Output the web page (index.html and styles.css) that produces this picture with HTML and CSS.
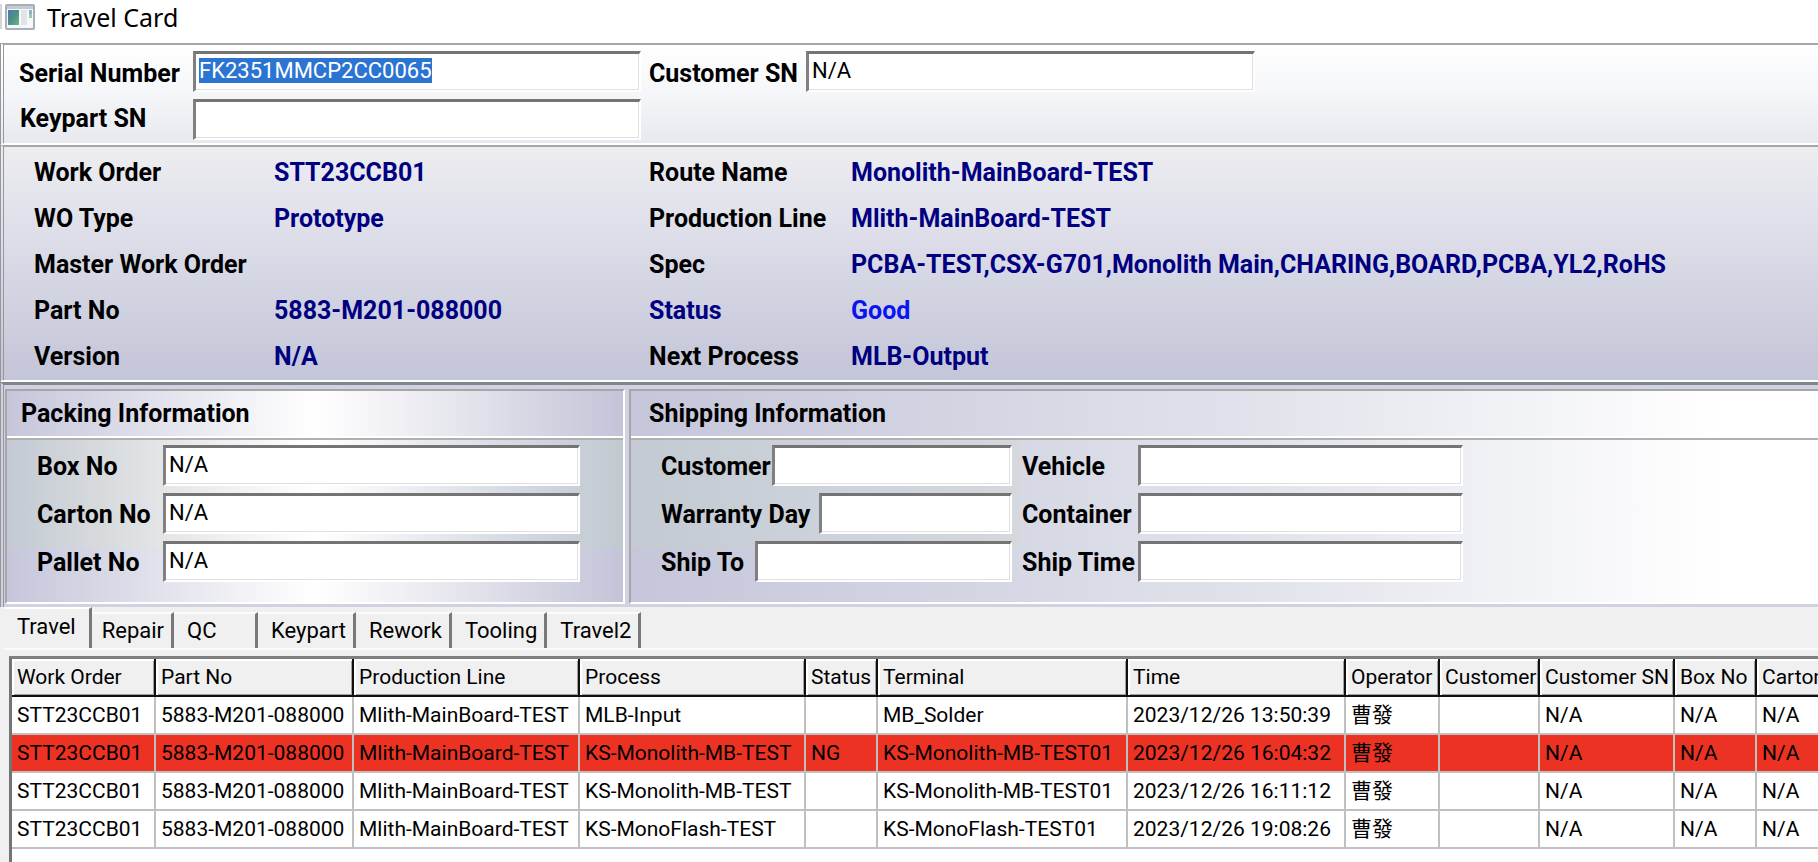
FILE: index.html
```html
<!DOCTYPE html>
<html lang="en">
<head>
<meta charset="utf-8">
<title>Travel Card</title>
<link rel="stylesheet" href="styles.css">
</head>
<body>
<header class="titlebar">
  <svg class="app-icon" viewBox="0 0 36 32" aria-hidden="true">
    <defs><linearGradient id="pic" x1="0" y1="0" x2="1" y2="1"><stop offset="0" stop-color="#4a78b4"/><stop offset="0.5" stop-color="#4f8f86"/><stop offset="1" stop-color="#6fb386"/></linearGradient></defs>
    <path d="M1 3V28" stroke="#d4d6da" stroke-width="2"/>
    <rect x="6" y="4" width="28" height="24" rx="1" fill="#f6f7f9" stroke="#a9afb8" stroke-width="2"/>
    <rect x="7" y="5" width="26" height="3" fill="#c6cbd3"/>
    <rect x="8" y="9" width="11" height="15" fill="url(#pic)"/>
    <rect x="21" y="9" width="6" height="15" fill="#e2e3e6"/>
    <rect x="29" y="9" width="3" height="4" fill="#8fb0dc"/>
    <rect x="29" y="13" width="3" height="4" fill="#9ccb9c"/>
  </svg>
  <h1 class="title">Travel Card</h1>
</header>
<main>
  <form class="search">
    <label class="label" for="sn">Serial Number</label>
    <input class="field" id="sn" value="FK2351MMCP2CC0065">
    <label class="label label-csn" for="csn">Customer SN</label>
    <input class="field" id="csn" value="N/A">
    <label class="label" for="ksn">Keypart SN</label>
    <input class="field" id="ksn">
  </form>

  <section class="details">
    <span>Work Order</span><span class="value">STT23CCB01</span><span>Route Name</span><span class="value">Monolith-MainBoard-TEST</span>
    <span>WO Type</span><span class="value">Prototype</span><span>Production Line</span><span class="value">Mlith-MainBoard-TEST</span>
    <span>Master Work Order</span><span class="value"></span><span>Spec</span><span class="value">PCBA-TEST,CSX-G701,Monolith Main,CHARING,BOARD,PCBA,YL2,RoHS</span>
    <span>Part No</span><span class="value">5883-M201-088000</span><span class="value">Status</span><span class="good">Good</span>
    <span>Version</span><span class="value">N/A</span><span>Next Process</span><span class="value">MLB-Output</span>
  </section>

  <div class="groups">
    <section class="group packing">
      <h2 class="group-title">Packing Information</h2>
      <div class="group-body">
        <div class="row"><label for="box">Box No</label><input class="field" id="box" value="N/A"></div>
        <div class="row"><label for="carton">Carton No</label><input class="field" id="carton" value="N/A"></div>
        <div class="row"><label for="pallet">Pallet No</label><input class="field" id="pallet" value="N/A"></div>
      </div>
    </section>
    <section class="group shipping">
      <h2 class="group-title">Shipping Information</h2>
      <div class="group-body">
        <div class="row"><label class="snug-customer" for="cust">Customer</label><input class="field" id="cust"></div>
        <div class="row"><label for="vehicle">Vehicle</label><input class="field" id="vehicle"></div>
        <div class="row"><label class="snug-warranty" for="warranty">Warranty Day</label><input class="field" id="warranty"></div>
        <div class="row"><label for="container">Container</label><input class="field" id="container"></div>
        <div class="row"><label class="snug-ship" for="shipto">Ship To</label><input class="field" id="shipto"></div>
        <div class="row"><label for="shiptime">Ship Time</label><input class="field" id="shiptime"></div>
      </div>
    </section>
  </div>

  <section class="records">
    <nav class="tabs" role="tablist">
      <button class="tab active" role="tab" aria-selected="true">Travel</button>
      <button class="tab tab-repair" role="tab">Repair</button>
      <button class="tab tab-qc" role="tab">QC</button>
      <button class="tab" role="tab">Keypart</button>
      <button class="tab" role="tab">Rework</button>
      <button class="tab" role="tab">Tooling</button>
      <button class="tab" role="tab">Travel2</button>
    </nav>
    <div class="grid">
      <table>
        <colgroup><col class="w-order"><col class="w-part"><col class="w-line"><col class="w-line"><col class="w-status"><col class="w-terminal"><col class="w-time"><col class="w-operator"><col class="w-customer"><col class="w-csn"><col class="w-box"><col class="w-carton"></colgroup>
        <thead><tr><th>Work Order</th><th>Part No</th><th>Production Line</th><th>Process</th><th>Status</th><th>Terminal</th><th>Time</th><th>Operator</th><th>Customer</th><th>Customer SN</th><th>Box No</th><th>Carton No</th></tr></thead>
        <tbody>
          <tr><td>STT23CCB01</td><td>5883-M201-088000</td><td>Mlith-MainBoard-TEST</td><td>MLB-Input</td><td></td><td>MB_Solder</td><td>2023/12/26 13:50:39</td><td>曹發</td><td></td><td>N/A</td><td>N/A</td><td>N/A</td></tr>
          <tr class="failed"><td>STT23CCB01</td><td>5883-M201-088000</td><td>Mlith-MainBoard-TEST</td><td>KS-Monolith-MB-TEST</td><td>NG</td><td>KS-Monolith-MB-TEST01</td><td>2023/12/26 16:04:32</td><td>曹發</td><td></td><td>N/A</td><td>N/A</td><td>N/A</td></tr>
          <tr><td>STT23CCB01</td><td>5883-M201-088000</td><td>Mlith-MainBoard-TEST</td><td>KS-Monolith-MB-TEST</td><td></td><td>KS-Monolith-MB-TEST01</td><td>2023/12/26 16:11:12</td><td>曹發</td><td></td><td>N/A</td><td>N/A</td><td>N/A</td></tr>
          <tr><td>STT23CCB01</td><td>5883-M201-088000</td><td>Mlith-MainBoard-TEST</td><td>KS-MonoFlash-TEST</td><td></td><td>KS-MonoFlash-TEST01</td><td>2023/12/26 19:08:26</td><td>曹發</td><td></td><td>N/A</td><td>N/A</td><td>N/A</td></tr>
        </tbody>
      </table>
    </div>
  </section>
</main>
<script src="app.js"></script>
</body>
</html>
```

FILE: styles.css
```css
* { box-sizing: border-box; }

body {
  margin: 0;
  min-height: 100vh;
  display: flex;
  flex-direction: column;
  overflow: hidden;
  background: #fff;
  color: #000;
  font: 22px/28px Roboto, "Noto Sans CJK TC", sans-serif;
}

.titlebar {
  display: flex;
  align-items: center;
  gap: 11px;
  height: 43px;
  padding-bottom: 9px;
}
.app-icon { width: 36px; height: 32px; }
.title { margin: 0; font: 25px/32px "Noto Sans", "Open Sans", sans-serif; }

main {
  flex: 1;
  display: flex;
  flex-direction: column;
  background: #f0f0f0;
}
.search, .details, .groups { border-left: 4px double #96969c; }

/* sunken text box */
.field {
  width: 100%;
  min-width: 0;
  height: 41px;
  padding: 0 3px 4px;
  border: 2px solid #fff;
  border-top: 3px solid #747474;
  border-left: 3px solid #808080;
  border-radius: 0;
  outline: 0;
  background: #fff;
  box-shadow: inset -1px -1px #e0e0e0;
  color: #000;
  font: inherit;
  font-size: 22px;
  font-weight: 400;
}
.field::selection { background: #2b74d2; color: #fff; }

.search {
  display: grid;
  grid-template-columns: 174px 448px 165px 449px;
  row-gap: 7px;
  padding: 6px 15px 3px;
  border-top: 2px solid #a6a6a6;
  border-bottom: 2px solid #fff;
  background: linear-gradient(#fff, #f5f6f9 50%, #e8e9ef);
}
.label {
  padding-top: 9px;
  font-size: 25px;
  font-weight: 700;
}
.label-csn { padding-left: 8px; }
.label[for="ksn"] { padding-top: 6px; padding-left: 1px; }

.details {
  display: grid;
  grid-template-columns: 240px 375px 202px 1fr;
  grid-auto-rows: 46px;
  align-items: center;
  padding: 3px 0 0 30px;
  border-top: 2px solid #a6a6a6;
  border-bottom: 2px solid #fff;
  background: linear-gradient(#ededf0, #e2e3ec 25%, #c3c5d8);
  font-size: 25px;
  font-weight: 700;
  white-space: nowrap;
}
.value { color: #000080; }
.good { color: #0a14f0; }

.groups {
  display: grid;
  grid-template-columns: 620px 1fr;
  gap: 4px;
  padding: 4px 0 3px 1px;
  border-top: 3px solid #82848e;
  background: #d0d2e2;
}
.group {
  border: 2px solid #fff;
  border-top-color: #a6a6a6;
  border-left-color: #a6a6a6;
  font-size: 25px;
  font-weight: 700;
}
.shipping { border-right: 0; }
.group-title {
  margin: 0;
  padding: 9px 0 8px 14px;
  border-bottom: 2px solid #fff;
  font-size: 25px;
  line-height: 28px;
}
.group-body {
  display: grid;
  gap: 7px;
  padding: 5px 0 20px 30px;
  border-top: 2px solid #b0b0b0;
}
.packing .group-body { padding-right: 43px; }
.packing .group-title { background: linear-gradient(90deg, #c5c6da, #fff 50%, #e3e3ec 75%, #c3c4d8); }
.packing .group-body {
  background:
    linear-gradient(90deg, #c3cad4, #d7dadd 15%, #fff 50%, #cdd4de 88%, #c1c9d0) 0 0 / 100% 108px no-repeat,
    linear-gradient(90deg, #c5c6da, #fff 50%, #e3e3ec 75%, #c3c4d8);
}
.shipping .group-title {
  padding-left: 18px;
  background: linear-gradient(90deg, #c5c6da, #dfe1ea 50%, #fff 92%);
}
.shipping .group-body {
  grid-template-columns: 351px 441px;
  column-gap: 10px;
  background:
    linear-gradient(90deg, #c3cad2, #cdd4dc 60%, #d5d8dd) 0 0 / 390px 108px no-repeat,
    linear-gradient(90deg, #c5c6da, #dfe1ea 50%, #fff 92%);
}
.row { display: flex; }
.row label { flex: none; padding-top: 8px; white-space: nowrap; }
.packing .row label { width: 126px; }
.shipping .row label { width: 116px; }
.shipping .row .snug-customer { width: 111px; }
.shipping .row .snug-warranty { width: 158px; }
.shipping .row .snug-ship { width: 94px; }

.records {
  flex: 1;
  display: flex;
  flex-direction: column;
  padding-left: 4px;
}
.tabs {
  display: flex;
  align-items: flex-end;
  height: 43px;
  border-bottom: 2px solid #fafafa;
}
.tab {
  height: 36px;
  padding: 0 7px 0 13px;
  border: 0;
  border-top: 2px solid #fcfcfc;
  border-right: 3px solid #787878;
  background: #f0f0f0;
  color: #000;
  font: inherit;
  text-align: left;
}
.active {
  height: 41px;
  padding: 0 13px 4px;
  border-top-color: #fff;
}
.tab-repair { padding-left: 10px; }
.tab-qc { width: 84px; }

.grid {
  flex: 1;
  margin: 6px 0 0 5px;
  border-top: 3px solid #808080;
  border-left: 3px solid #747474;
  background: #fff;
  overflow: hidden;
}
table {
  width: 1862px;
  table-layout: fixed;
  border-collapse: separate;
  border-spacing: 0;
  font-size: 21px;
}
.w-order { width: 144px; }
.w-part { width: 198px; }
.w-line { width: 226px; }
.w-status { width: 72px; }
.w-terminal { width: 250px; }
.w-time { width: 218px; }
.w-operator { width: 94px; }
.w-customer { width: 100px; }
.w-csn { width: 135px; }
.w-box { width: 82px; }
.w-carton { width: 117px; }
th, td {
  height: 38px;
  padding: 0 0 0 5px;
  border-right: 2px solid #c0c0c0;
  border-bottom: 2px solid #c0c0c0;
  font-weight: 400;
  text-align: left;
  white-space: nowrap;
}
th {
  border-color: #101010;
  background: #f0f0f0;
  box-shadow: inset 2px 2px #fff, inset -1px -1px #a0a0a0;
}
.failed td { background: #ec3223; }
```

FILE: app.js
```js
const serial = document.getElementById("sn");
serial.focus();
serial.select();
```
